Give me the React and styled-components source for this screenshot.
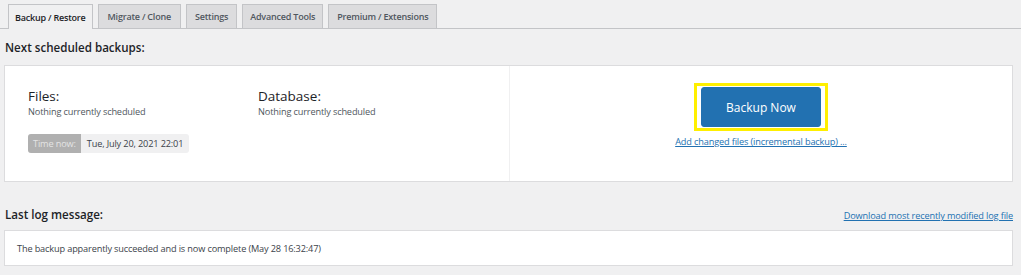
import React from "react";
import styled, { createGlobalStyle } from "styled-components";

const Global = createGlobalStyle`
  html, body { margin: 0; padding: 0; background: #f0f0f1; }
  body { font-family: "Open Sans", "Noto Sans", sans-serif; color: #3c434a; }
  * { box-sizing: border-box; }
`;

const Page = styled.div`
  width: 1021px;
  height: 275px;
  padding: 4px 8px 0 4px;
  overflow: hidden;
`;

const TabBar = styled.div`
  display: flex;
  gap: 5px;
  border-bottom: 1px solid #c3c4c7;
  height: 25px;
  margin-right: -8px;
  margin-left: -4px;
  padding-left: 8px;
`;

const Tab = styled.div`
  padding: 0 ${(p) => p.$pad}px;
  display: flex;
  align-items: center;
  font-size: 9px;
  font-weight: 600;
  letter-spacing: -0.2px;
  border: 1px solid #c3c4c7;
  border-bottom: none;
  background: ${(p) => (p.$active ? "#f0f0f1" : "#dcdcde")};
  color: ${(p) => (p.$active ? "#1d2327" : "#50575e")};
  margin-bottom: ${(p) => (p.$active ? "-1px" : "0")};
  height: ${(p) => (p.$active ? "25px" : "24px")};
  align-self: flex-end;
`;

const Heading = styled.h2`
  margin: 0;
  font-size: 11.6px;
  font-weight: 600;
  color: #1d2327;
  padding-left: 1px;
`;

const SchedHeading = styled(Heading)`
  margin-top: 11px;
  height: 25px;
`;

const Panel = styled.div`
  display: grid;
  grid-template-columns: 505px 1fr;
  background: #fff;
  border: 1px solid #dcdcde;
  height: 117px;
`;

const LeftCol = styled.div`
  padding: 21px 0 0 23px;
  border-right: 1px solid #f0f0f1;
`;

const Cols = styled.div`
  display: grid;
  grid-template-columns: 230px 1fr;
`;

const ColTitle = styled.div`
  font-size: 13.5px;
  font-weight: 400;
  color: #1d2327;
  line-height: 18px;
`;

const SmallText = styled.div`
  font-size: 9.2px;
  color: #50575e;
  line-height: 14px;
  letter-spacing: -0.15px;
`;

const TimeBadge = styled.div`
  display: inline-flex;
  margin-top: 15px;
  height: 19px;
  border-radius: 3px;
  overflow: hidden;
  background: #f0f0f1;
  font-size: 9.2px;
  letter-spacing: -0.15px;
`;

const BadgeLabel = styled.span`
  background: #b0b0b0;
  color: #e4e4e4;
  padding: 0 5px;
  display: flex;
  align-items: center;
`;

const BadgeValue = styled.span`
  color: #3c434a;
  padding: 0 6px;
  display: flex;
  align-items: center;
`;

const RightCol = styled.div`
  display: flex;
  flex-direction: column;
  align-items: center;
  padding-top: 17px;
`;

const Highlight = styled.div`
  border: 3px solid #ffef00;
  padding: 1px 4px;
  background: #fff;
`;

const BackupButton = styled.button`
  width: 120px;
  height: 40px;
  background: #2271b1;
  color: #fff;
  border: 1px solid #2271b1;
  border-radius: 3px;
  font-family: inherit;
  font-size: 12px;
  display: block;
`;

const Link = styled.a`
  color: #2271b1;
  font-size: 9.2px;
  text-decoration: underline;
  letter-spacing: -0.15px;
  cursor: pointer;
`;

const IncLink = styled(Link)`
  margin-top: 4px;
`;

const LogHeader = styled.div`
  display: flex;
  justify-content: space-between;
  align-items: flex-end;
  margin-top: 23px;
  height: 25px;
  padding-bottom: 8px;
`;

const LogBox = styled.div`
  background: #fff;
  border: 1px solid #dcdcde;
  height: 36px;
  display: flex;
  align-items: center;
  padding-left: 12px;
  font-size: 9.2px;
  color: #3c434a;
  letter-spacing: -0.15px;
`;

const tabs = [
  { label: "Backup / Restore", active: true, pad: 6 },
  { label: "Migrate / Clone", pad: 9 },
  { label: "Settings", pad: 8 },
  { label: "Advanced Tools", pad: 7 },
  { label: "Premium / Extensions", pad: 8 },
];

export default function App() {
  return (
    <>
      <Global />
      <Page>
        <TabBar>
          {tabs.map((t) => (
            <Tab key={t.label} $active={t.active} $pad={t.pad}>
              {t.label}
            </Tab>
          ))}
        </TabBar>
        <SchedHeading>Next scheduled backups:</SchedHeading>
        <Panel>
          <LeftCol>
            <Cols>
              <div>
                <ColTitle>Files:</ColTitle>
                <SmallText>Nothing currently scheduled</SmallText>
              </div>
              <div>
                <ColTitle>Database:</ColTitle>
                <SmallText>Nothing currently scheduled</SmallText>
              </div>
            </Cols>
            <TimeBadge>
              <BadgeLabel>Time now:</BadgeLabel>
              <BadgeValue>Tue, July 20, 2021 22:01</BadgeValue>
            </TimeBadge>
          </LeftCol>
          <RightCol>
            <Highlight>
              <BackupButton>Backup Now</BackupButton>
            </Highlight>
            <IncLink>Add changed files (incremental backup) ...</IncLink>
          </RightCol>
        </Panel>
        <LogHeader>
          <Heading>Last log message:</Heading>
          <Link>Download most recently modified log file</Link>
        </LogHeader>
        <LogBox>The backup apparently succeeded and is now complete (May 28 16:32:47)</LogBox>
      </Page>
    </>
  );
}
